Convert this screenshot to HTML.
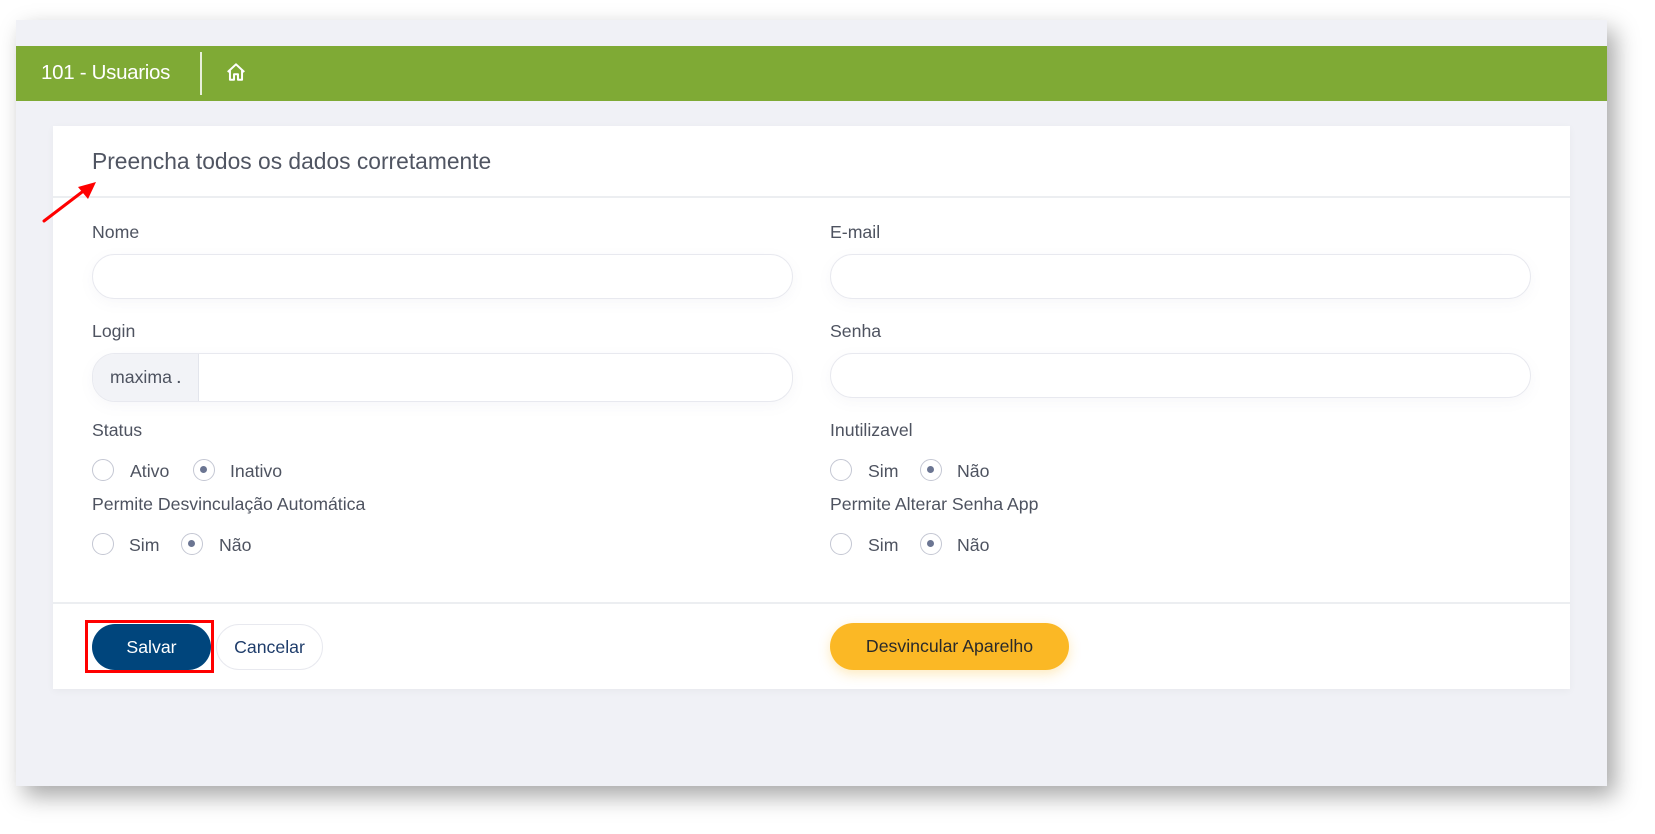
<!DOCTYPE html>
<html><head><meta charset="utf-8"><style>
*{margin:0;padding:0;box-sizing:border-box}
body{width:1655px;height:834px;background:#fff;position:relative;overflow:hidden;font-family:"Liberation Sans",sans-serif;color:#4e5360}
.a{position:absolute}
#frame{left:16px;top:20px;width:1591px;height:766px;background:#f0f1f6;box-shadow:8px 10px 22px rgba(0,0,0,.35)}
#green{left:16px;top:46px;width:1591px;height:55px;background:#7faa35}
#card{left:53px;top:126px;width:1517px;height:563px;background:#fff;box-shadow:0 2px 8px rgba(0,0,0,.04)}
.lbl{font-size:17.7px;color:#4e5360}
.inp{height:45px;border:1px solid #e8e9ef;border-radius:23px;background:#fff;box-shadow:0 4px 14px rgba(120,120,160,.06)}
.rad{width:22px;height:22px;border:1.5px solid #c4c7d3;border-radius:50%;background:#fff}
.rad.on::after{content:"";position:absolute;left:6px;top:6px;width:7px;height:7px;border-radius:50%;background:#6b7592}
.rt{font-size:17.7px;color:#4e5360}
.hl{height:2px;background:#eceef1}
</style></head><body>
<div class="a" id="frame"></div>
<div class="a" id="green"></div>
<div class="a" style="left:41px;top:61px;font-size:20.5px;color:#fff;letter-spacing:-0.3px">101 - Usuarios</div>
<div class="a" style="left:200px;top:52px;width:2px;height:43px;background:#e8f0da"></div>
<svg class="a" style="left:225px;top:61px" width="22" height="22" viewBox="0 0 20 20"><path d="M2.5 10 L10 3 L17.5 10 M4.5 8.5 V17 H8.2 V12 H11.8 V17 H15.5 V8.5" fill="none" stroke="#fff" stroke-width="1.8" stroke-linejoin="round"/></svg>
<div class="a" id="card"></div>
<div class="a" style="left:92px;top:148px;font-size:22.8px;color:#505562">Preencha todos os dados corretamente</div>
<div class="a hl" style="left:53px;top:196px;width:1517px"></div>
<svg class="a" style="left:38px;top:178px" width="64" height="50"><line x1="6" y1="43" x2="48" y2="11" stroke="#f00" stroke-width="3" stroke-linecap="round"/><polygon points="58,4 40,9 50,21" fill="#f00"/></svg>

<div class="a lbl" style="left:92px;top:222px">Nome</div>
<div class="a inp" style="left:92px;top:254px;width:701px"></div>
<div class="a lbl" style="left:830px;top:222px">E-mail</div>
<div class="a inp" style="left:830px;top:254px;width:701px"></div>

<div class="a lbl" style="left:92px;top:321px">Login</div>
<div class="a inp" style="left:92px;top:353px;width:701px;height:49px;overflow:hidden"><div style="width:106px;height:100%;background:#f2f3f7;border-right:1px solid #e3e5ec"></div></div>
<div class="a" style="left:110px;top:367px;font-size:17.7px;color:#4e5360">maxima <b style="font-size:14px">.</b></div>
<div class="a lbl" style="left:830px;top:321px">Senha</div>
<div class="a inp" style="left:830px;top:353px;width:701px"></div>

<div class="a lbl" style="left:92px;top:420px">Status</div>
<div class="a rad" style="left:92px;top:459px"></div><div class="a rt" style="left:130px;top:461px">Ativo</div>
<div class="a rad on" style="left:193px;top:459px"></div><div class="a rt" style="left:230px;top:461px">Inativo</div>
<div class="a lbl" style="left:92px;top:494px">Permite Desvinculação Automática</div>
<div class="a rad" style="left:92px;top:533px"></div><div class="a rt" style="left:129px;top:535px">Sim</div>
<div class="a rad on" style="left:181px;top:533px"></div><div class="a rt" style="left:219px;top:535px">Não</div>

<div class="a lbl" style="left:830px;top:420px">Inutilizavel</div>
<div class="a rad" style="left:830px;top:459px"></div><div class="a rt" style="left:868px;top:461px">Sim</div>
<div class="a rad on" style="left:920px;top:459px"></div><div class="a rt" style="left:957px;top:461px">Não</div>
<div class="a lbl" style="left:830px;top:494px">Permite Alterar Senha App</div>
<div class="a rad" style="left:830px;top:533px"></div><div class="a rt" style="left:868px;top:535px">Sim</div>
<div class="a rad on" style="left:920px;top:533px"></div><div class="a rt" style="left:957px;top:535px">Não</div>

<div class="a hl" style="left:53px;top:602px;width:1517px"></div>
<div class="a" style="left:92px;top:624px;width:119px;height:46px;border-radius:23px;background:#00457c;color:#fff;font-size:17.7px;text-align:center;line-height:46px">Salvar</div>
<div class="a" style="left:85px;top:620px;width:129px;height:53px;border:3px solid #f00"></div>
<div class="a" style="left:216px;top:624px;width:107px;height:46px;border-radius:23px;border:1px solid #e8e9ef;background:#fff;color:#1f3d6b;font-size:17.7px;text-align:center;line-height:44px">Cancelar</div>
<div class="a" style="left:830px;top:623px;width:239px;height:47px;border-radius:24px;background:#fbb825;color:#2a2a2a;font-size:17.7px;text-align:center;line-height:47px;box-shadow:0 4px 12px rgba(251,184,37,.3)">Desvincular Aparelho</div>
</body></html>
